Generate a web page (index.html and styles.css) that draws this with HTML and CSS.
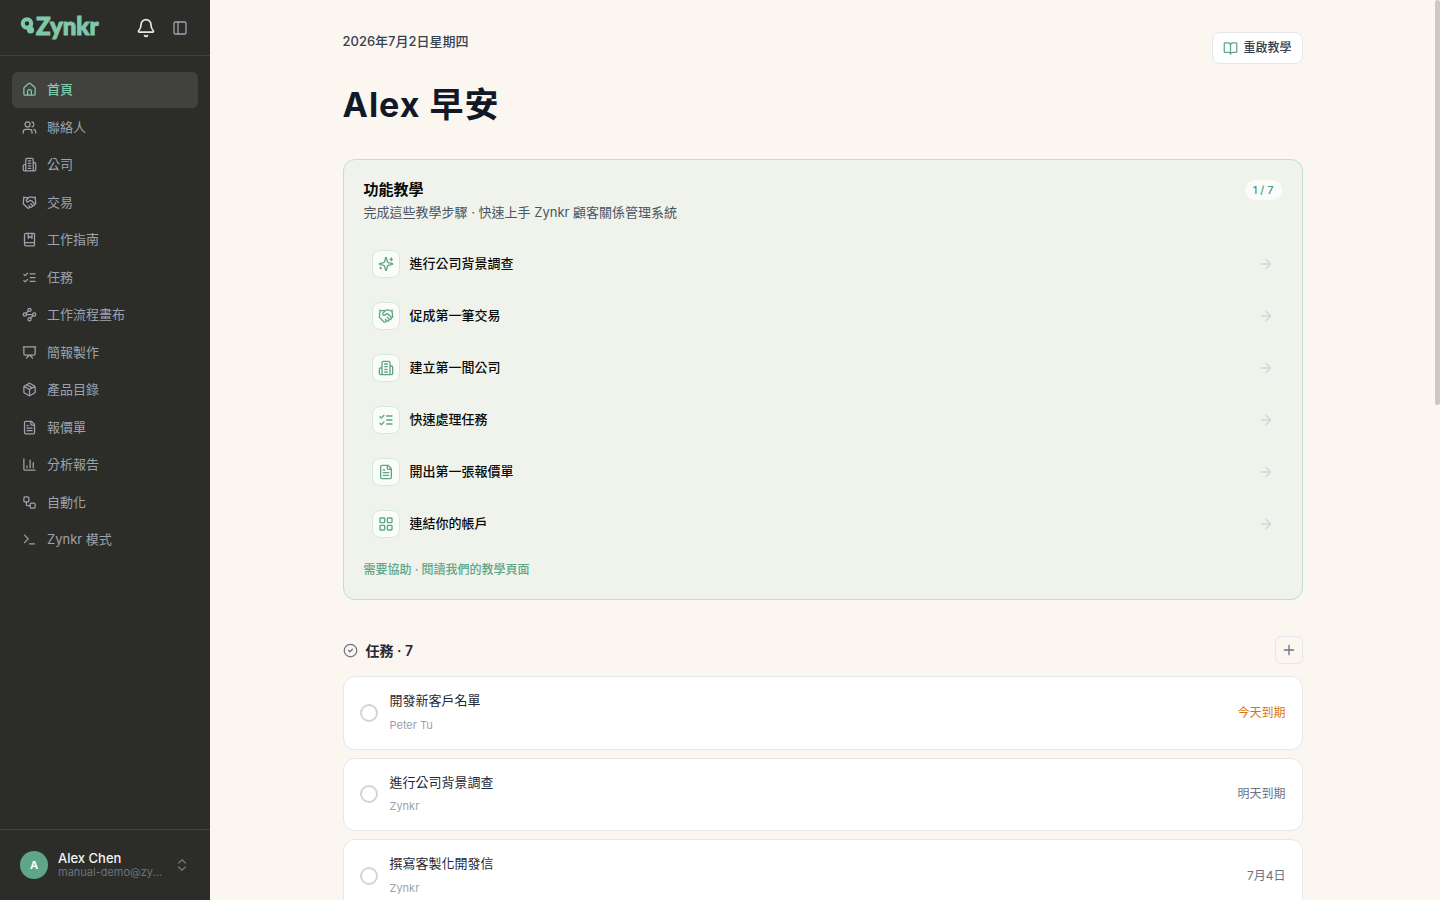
FILE: index.html
```html
<!DOCTYPE html>
<html lang="zh-Hant">

<head>
    <meta charset="utf-8">
    <title>Zynkr</title>
    <link rel="stylesheet" href="styles.css">
</head>

<body>
    <!-- shared icons -->
    <svg class="sprite" aria-hidden="true">
        <symbol id="i-home" viewBox="0 0 24 24"><path d="M15 21v-6a3 3 0 0 0-6 0v6M3 10a2 2 0 0 1 .709-1.528l7-5.999a2 2 0 0 1 2.582 0l7 5.999A2 2 0 0 1 21 10v9a2 2 0 0 1-2 2H5a2 2 0 0 1-2-2z"/></symbol>
        <symbol id="i-users" viewBox="0 0 24 24"><path d="M16 21v-2a4 4 0 0 0-4-4H6a4 4 0 0 0-4 4v2M22 21v-2a4 4 0 0 0-3-3.87M16 3.13a4 4 0 0 1 0 7.75"/><circle cx="9" cy="7" r="4"/></symbol>
        <symbol id="i-building" viewBox="0 0 24 24"><path d="M6 22V4a2 2 0 0 1 2-2h8a2 2 0 0 1 2 2v18ZM6 12H4a2 2 0 0 0-2 2v6a2 2 0 0 0 2 2h2M18 9h2a2 2 0 0 1 2 2v9a2 2 0 0 1-2 2h-2M10 6h4M10 10h4M10 14h4M10 18h4"/></symbol>
        <symbol id="i-handshake" viewBox="0 0 24 24"><path d="m11 17 2 2a1 1 0 1 0 3-3M14 14l2.5 2.5a1 1 0 1 0 3-3l-3.88-3.88a3 3 0 0 0-4.24 0l-.88.88a1 1 0 1 1-3-3l2.81-2.81a5.79 5.79 0 0 1 7.06-.87l.47.28a2 2 0 0 0 1.42.25L21 4M21 3l1 11h-2M3 3 2 14l6.5 6.5a1 1 0 1 0 3-3M3 4h8"/></symbol>
        <symbol id="i-book-marked" viewBox="0 0 24 24"><path d="M10 2v8l3-3 3 3V2M4 19.5v-15A2.5 2.5 0 0 1 6.5 2H19a1 1 0 0 1 1 1v18a1 1 0 0 1-1 1H6.5a1 1 0 0 1 0-5H20"/></symbol>
        <symbol id="i-checks" viewBox="0 0 24 24"><path d="m3 17 2 2 4-4M3 7l2 2 4-4M13 6h8M13 12h8M13 18h8"/></symbol>
        <symbol id="i-waypoints" viewBox="0 0 24 24"><circle cx="12" cy="4.5" r="2.5"/><circle cx="4.5" cy="12" r="2.5"/><circle cx="19.5" cy="12" r="2.5"/><circle cx="12" cy="19.5" r="2.5"/><path d="m10.2 6.3-3.9 3.9M7 12h10M13.8 17.7l3.9-3.9"/></symbol>
        <symbol id="i-presentation" viewBox="0 0 24 24"><path d="M2 3h20M21 3v11a2 2 0 0 1-2 2H5a2 2 0 0 1-2-2V3M7 21l5-5 5 5"/></symbol>
        <symbol id="i-package" viewBox="0 0 24 24"><path d="M11 21.73a2 2 0 0 0 2 0l7-4A2 2 0 0 0 21 16V8a2 2 0 0 0-1-1.73l-7-4a2 2 0 0 0-2 0l-7 4A2 2 0 0 0 3 8v8a2 2 0 0 0 1 1.73zM12 22V12M3.3 7l8.7 5 8.7-5M7.5 4.27l9 5.15"/></symbol>
        <symbol id="i-file" viewBox="0 0 24 24"><path d="M15 2H6a2 2 0 0 0-2 2v16a2 2 0 0 0 2 2h12a2 2 0 0 0 2-2V7ZM14 2v4a2 2 0 0 0 2 2h4M10 9H8M16 13H8M16 17H8"/></symbol>
        <symbol id="i-chart" viewBox="0 0 24 24"><path d="M3 3v16a2 2 0 0 0 2 2h16M18 17V9M13 17V5M8 17v-3"/></symbol>
        <symbol id="i-workflow" viewBox="0 0 24 24"><rect x="3" y="3" width="8" height="8" rx="2"/><rect x="13" y="13" width="8" height="8" rx="2"/><path d="M7 11v4a2 2 0 0 0 2 2h4"/></symbol>
        <symbol id="i-terminal" viewBox="0 0 24 24"><path d="m4 17 6-6-6-6M12 19h8"/></symbol>
        <symbol id="i-bell" viewBox="0 0 24 24"><path d="M10.268 21a2 2 0 0 0 3.464 0M3.262 15.326A1 1 0 0 0 4 17h16a1 1 0 0 0 .74-1.673C19.41 13.956 18 12.499 18 8A6 6 0 0 0 6 8c0 4.499-1.411 5.956-2.738 7.326"/></symbol>
        <symbol id="i-panel" viewBox="0 0 24 24"><rect x="3" y="3" width="18" height="18" rx="2"/><path d="M9 3v18"/></symbol>
        <symbol id="i-sparkles" viewBox="0 0 24 24"><path d="M9.937 15.5A2 2 0 0 0 8.5 14.063l-6.135-1.582a.5.5 0 0 1 0-.962L8.5 9.936A2 2 0 0 0 9.937 8.5l1.582-6.135a.5.5 0 0 1 .963 0L14.063 8.5A2 2 0 0 0 15.5 9.937l6.135 1.581a.5.5 0 0 1 0 .964L15.5 14.063a2 2 0 0 0-1.437 1.437l-1.582 6.135a.5.5 0 0 1-.963 0zM20 3v4M22 5h-4M4 17v2M5 18H3"/></symbol>
        <symbol id="i-grid" viewBox="0 0 24 24"><rect x="3" y="3" width="7" height="7" rx="1"/><rect x="14" y="3" width="7" height="7" rx="1"/><rect x="14" y="14" width="7" height="7" rx="1"/><rect x="3" y="14" width="7" height="7" rx="1"/></symbol>
        <symbol id="i-book-open" viewBox="0 0 24 24"><path d="M12 7v14M3 18a1 1 0 0 1-1-1V4a1 1 0 0 1 1-1h5a4 4 0 0 1 4 4 4 4 0 0 1 4-4h5a1 1 0 0 1 1 1v13a1 1 0 0 1-1 1h-6a3 3 0 0 0-3 3 3 3 0 0 0-3-3z"/></symbol>
        <symbol id="i-circle-check" viewBox="0 0 24 24"><circle cx="12" cy="12" r="10"/><path d="m9 12 2 2 4-4"/></symbol>
        <symbol id="i-updown" viewBox="0 0 24 24"><path d="m7 15 5 5 5-5M7 9l5-5 5 5"/></symbol>
        <symbol id="i-arrow" viewBox="0 0 24 24"><path d="M5 12h14M12 5l7 7-7 7"/></symbol>
        <symbol id="i-plus" viewBox="0 0 24 24"><path d="M5 12h14M12 5v14"/></symbol>
    </svg>

    <div class="app">
        <aside class="sidebar">
            <div class="sidebar-top">
                <a class="logo" href="#">
                    <svg class="logo-mark" viewBox="0 0 15 18"><circle cx="7" cy="6.5" r="4.2"/><path d="M10.5 8v5"/><circle class="logo-dot" cx="10.5" cy="13" r="3.6"/></svg>
                    <span>Zynkr</span>
                </a>
                <button class="icon-btn bell" aria-label="通知"><svg class="icon icon-lg"><use href="#i-bell"/></svg></button>
                <button class="icon-btn" aria-label="收合側欄"><svg class="icon icon-md"><use href="#i-panel"/></svg></button>
            </div>

            <nav class="nav">
                <a class="nav-item active" href="#"><svg class="icon"><use href="#i-home"/></svg>首頁</a>
                <a class="nav-item" href="#"><svg class="icon"><use href="#i-users"/></svg>聯絡人</a>
                <a class="nav-item" href="#"><svg class="icon"><use href="#i-building"/></svg>公司</a>
                <a class="nav-item" href="#"><svg class="icon"><use href="#i-handshake"/></svg>交易</a>
                <a class="nav-item" href="#"><svg class="icon"><use href="#i-book-marked"/></svg>工作指南</a>
                <a class="nav-item" href="#"><svg class="icon"><use href="#i-checks"/></svg>任務</a>
                <a class="nav-item" href="#"><svg class="icon"><use href="#i-waypoints"/></svg>工作流程畫布</a>
                <a class="nav-item" href="#"><svg class="icon"><use href="#i-presentation"/></svg>簡報製作</a>
                <a class="nav-item" href="#"><svg class="icon"><use href="#i-package"/></svg>產品目錄</a>
                <a class="nav-item" href="#"><svg class="icon"><use href="#i-file"/></svg>報價單</a>
                <a class="nav-item" href="#"><svg class="icon"><use href="#i-chart"/></svg>分析報告</a>
                <a class="nav-item" href="#"><svg class="icon"><use href="#i-workflow"/></svg>自動化</a>
                <a class="nav-item" href="#"><svg class="icon"><use href="#i-terminal"/></svg>Zynkr 模式</a>
            </nav>

            <button class="account">
                <span class="avatar">A</span>
                <span class="account-text">
                    <span class="account-name">Alex Chen</span>
                    <span class="account-mail">manual-demo@zy...</span>
                </span>
                <svg class="icon icon-md"><use href="#i-updown"/></svg>
            </button>
        </aside>

        <main class="main">
            <div class="content">
                <header class="page-head">
                    <div>
                        <p class="date">2026年7月2日星期四</p>
                        <h1>Alex 早安</h1>
                    </div>
                    <button class="restart"><svg class="icon"><use href="#i-book-open"/></svg>重啟教學</button>
                </header>

                <section class="guide">
                    <div class="guide-head">
                        <h2>功能教學</h2>
                        <span class="pill">1 / 7</span>
                    </div>
                    <p class="guide-sub">完成這些教學步驟 · 快速上手 Zynkr 顧客關係管理系統</p>
                    <div class="steps">
                        <a class="step" href="#"><span class="step-icon"><svg class="icon icon-md"><use href="#i-sparkles"/></svg></span>進行公司背景調查<svg class="icon icon-md arrow"><use href="#i-arrow"/></svg></a>
                        <a class="step" href="#"><span class="step-icon"><svg class="icon icon-md"><use href="#i-handshake"/></svg></span>促成第一筆交易<svg class="icon icon-md arrow"><use href="#i-arrow"/></svg></a>
                        <a class="step" href="#"><span class="step-icon"><svg class="icon icon-md"><use href="#i-building"/></svg></span>建立第一間公司<svg class="icon icon-md arrow"><use href="#i-arrow"/></svg></a>
                        <a class="step" href="#"><span class="step-icon"><svg class="icon icon-md"><use href="#i-checks"/></svg></span>快速處理任務<svg class="icon icon-md arrow"><use href="#i-arrow"/></svg></a>
                        <a class="step" href="#"><span class="step-icon"><svg class="icon icon-md"><use href="#i-file"/></svg></span>開出第一張報價單<svg class="icon icon-md arrow"><use href="#i-arrow"/></svg></a>
                        <a class="step" href="#"><span class="step-icon"><svg class="icon icon-md"><use href="#i-grid"/></svg></span>連結你的帳戶<svg class="icon icon-md arrow"><use href="#i-arrow"/></svg></a>
                    </div>
                    <a class="help" href="#">需要協助 · 閱讀我們的教學頁面</a>
                </section>

                <section class="tasks">
                    <div class="tasks-head">
                        <svg class="icon"><use href="#i-circle-check"/></svg>
                        <h2>任務 · 7</h2>
                        <button class="add" aria-label="新增任務"><svg class="icon icon-md"><use href="#i-plus"/></svg></button>
                    </div>
                    <div class="task">
                        <input type="checkbox" id="task1">
                        <label for="task1">開發新客戶名單<small>Peter Tu</small></label>
                        <span class="due today">今天到期</span>
                    </div>
                    <div class="task">
                        <input type="checkbox" id="task2">
                        <label for="task2">進行公司背景調查<small>Zynkr</small></label>
                        <span class="due">明天到期</span>
                    </div>
                    <div class="task">
                        <input type="checkbox" id="task3">
                        <label for="task3">撰寫客製化開發信<small>Zynkr</small></label>
                        <span class="due">7月4日</span>
                    </div>
                </section>
            </div>
        </main>
        <div class="scroll-track"><div class="scroll-thumb"></div></div>
    </div>
</body>

</html>
```
FILE: styles.css
```css
* {
    box-sizing: border-box;
}

body {
    margin: 0;
    background: #fbf6f0;
    font-family: Inter, "Noto Sans CJK TC", sans-serif;
    font-size: 13px;
    line-height: 1.5;
    color: #1f2937;
}

h1, h2, p {
    margin: 0;
}

a {
    color: inherit;
    text-decoration: none;
}

button {
    font: inherit;
    color: inherit;
    border: 0;
    background: none;
    padding: 0;
    cursor: pointer;
}

.sprite {
    display: none;
}

/* icons */
.icon {
    width: 15px;
    height: 15px;
    flex: none;
    fill: none;
    stroke: currentColor;
    stroke-width: 2;
    stroke-linecap: round;
    stroke-linejoin: round;
}

.icon-md {
    width: 16px;
    height: 16px;
}

.icon-lg {
    width: 20px;
    height: 20px;
}

.app {
    display: flex;
    height: 100vh;
    overflow: hidden;
}

/* sidebar */
.sidebar {
    display: flex;
    flex-direction: column;
    flex: none;
    width: 210px;
    background: #2c2d28;
    color: #9ca3af;
}

.sidebar-top {
    display: flex;
    align-items: center;
    gap: 8px;
    height: 56px;
    padding: 0 17px 0 20px;
    border-bottom: 1px solid #41423d;
}

.logo {
    display: flex;
    align-items: center;
    gap: 1px;
    margin-right: auto;
    padding-bottom: 3px;
    color: #7fc8a9;
    font-family: Lato, sans-serif;
    font-size: 24px;
    font-weight: 900;
    line-height: 24px;
    -webkit-text-stroke: 1px #7fc8a9;
}

.logo-mark {
    width: 15px;
    height: 18px;
    fill: none;
    stroke: currentColor;
    stroke-width: 4;
}

.logo-mark .logo-dot {
    fill: currentColor;
    stroke: none;
}

.icon-btn {
    display: flex;
    align-items: center;
    justify-content: center;
    width: 26px;
    height: 26px;
}

.bell {
    color: #e5e7eb;
}

.nav {
    display: flex;
    flex-direction: column;
    flex: 1;
    gap: 2px;
    padding: 16px 12px;
}

.nav-item {
    display: flex;
    align-items: center;
    gap: 10px;
    padding: 8px 10px;
    border-radius: 6px;
}

.nav-item.active {
    background: #41423d;
    color: #7fc8a9;
    font-weight: 500;
}

.account {
    display: flex;
    align-items: center;
    gap: 10px;
    padding: 21px 20px;
    border-top: 1px solid #41423d;
    color: #6b7280;
    text-align: left;
}

.avatar {
    width: 28px;
    height: 28px;
    border-radius: 50%;
    background: #5fa58a;
    color: #fff;
    font-size: 11px;
    font-weight: 700;
    line-height: 28px;
    text-align: center;
}

.account-text {
    flex: 1;
    min-width: 0;
}

.account-name,
.account-mail {
    display: block;
    white-space: nowrap;
    line-height: 14px;
}

.account-name {
    color: #f3f4f6;
    font-weight: 500;
}

.account-mail {
    font-size: 11px;
}

/* page */
.main {
    flex: 1;
    min-width: 0;
    overflow: hidden;
}

.content {
    max-width: 960px;
    margin: 0 auto;
    padding: 32px 0;
}

.page-head {
    display: flex;
    justify-content: space-between;
    align-items: flex-start;
    margin-bottom: 28px;
}

.date {
    color: #374151;
    font-weight: 500;
}

h1 {
    margin-top: 27px;
    color: #111827;
    font-size: 34px;
    font-weight: 700;
    letter-spacing: 1px;
    line-height: 52px;
}

.restart {
    display: flex;
    align-items: center;
    gap: 5px;
    height: 32px;
    padding: 0 10px;
    border: 1px solid #e5e7eb;
    border-radius: 8px;
    background: #fff;
    color: #374151;
    font-size: 12px;
    font-weight: 500;
}

.restart .icon {
    color: #5fa58a;
}

/* tutorial card */
.guide {
    padding: 20px;
    border: 1px solid #bfdfd0;
    border-radius: 12px;
    background: #eff3eb;
}

.guide-head {
    display: flex;
    justify-content: space-between;
    height: 23px;
}

.guide-head h2 {
    color: #0a0a0a;
    font-size: 15px;
    font-weight: 600;
    line-height: 20px;
}

.pill {
    height: 20px;
    padding: 0 8px;
    border-radius: 10px;
    background: #fafcf9;
    color: #4a9a7c;
    font-size: 11px;
    font-weight: 500;
    line-height: 20px;
}

.guide-sub {
    color: #4b5563;
}

.steps {
    margin: 16px 0 11px;
}

.step {
    display: flex;
    align-items: center;
    gap: 10px;
    padding: 12px 8px;
    color: #0a0a0a;
    font-weight: 500;
}

.step-icon {
    display: flex;
    align-items: center;
    justify-content: center;
    width: 28px;
    height: 28px;
    border: 1px solid #d3eadf;
    border-radius: 8px;
    background: #fafcf9;
    color: #5fa58a;
}

.arrow {
    margin-left: auto;
    color: #d1d5db;
}

.help {
    display: block;
    color: #5fa58a;
    font-size: 12px;
    font-weight: 500;
}

/* tasks */
.tasks {
    display: flex;
    flex-direction: column;
    gap: 8px;
    margin-top: 36px;
}

.tasks-head {
    display: flex;
    align-items: center;
    gap: 8px;
    margin-bottom: 4px;
    color: #6b7280;
}

.tasks-head h2 {
    color: #1f2937;
    font-size: 14px;
    font-weight: 600;
}

.add {
    display: flex;
    align-items: center;
    justify-content: center;
    width: 28px;
    height: 28px;
    margin-left: auto;
    border: 1px solid #e5e7eb;
    border-radius: 6px;
}

.task {
    display: flex;
    align-items: center;
    gap: 12px;
    padding: 14px 16px;
    border: 1px solid #e5e7eb;
    border-radius: 12px;
    background: #fff;
}

.task input {
    appearance: none;
    width: 18px;
    height: 18px;
    margin: 0;
    border: 2px solid #d1d5db;
    border-radius: 50%;
}

.task label {
    flex: 1;
}

.task small {
    display: block;
    margin-top: 4px;
    color: #9ca3af;
    font-size: 11px;
    line-height: 20px;
}

.due {
    color: #6b7280;
    font-size: 12px;
}

.due.today {
    color: #d97706;
}

/* scroll bar */
.scroll-track {
    flex: none;
    width: 5px;
}

.scroll-thumb {
    height: 45%;
    border-radius: 3px;
    background: #cdc9c2;
}
```
